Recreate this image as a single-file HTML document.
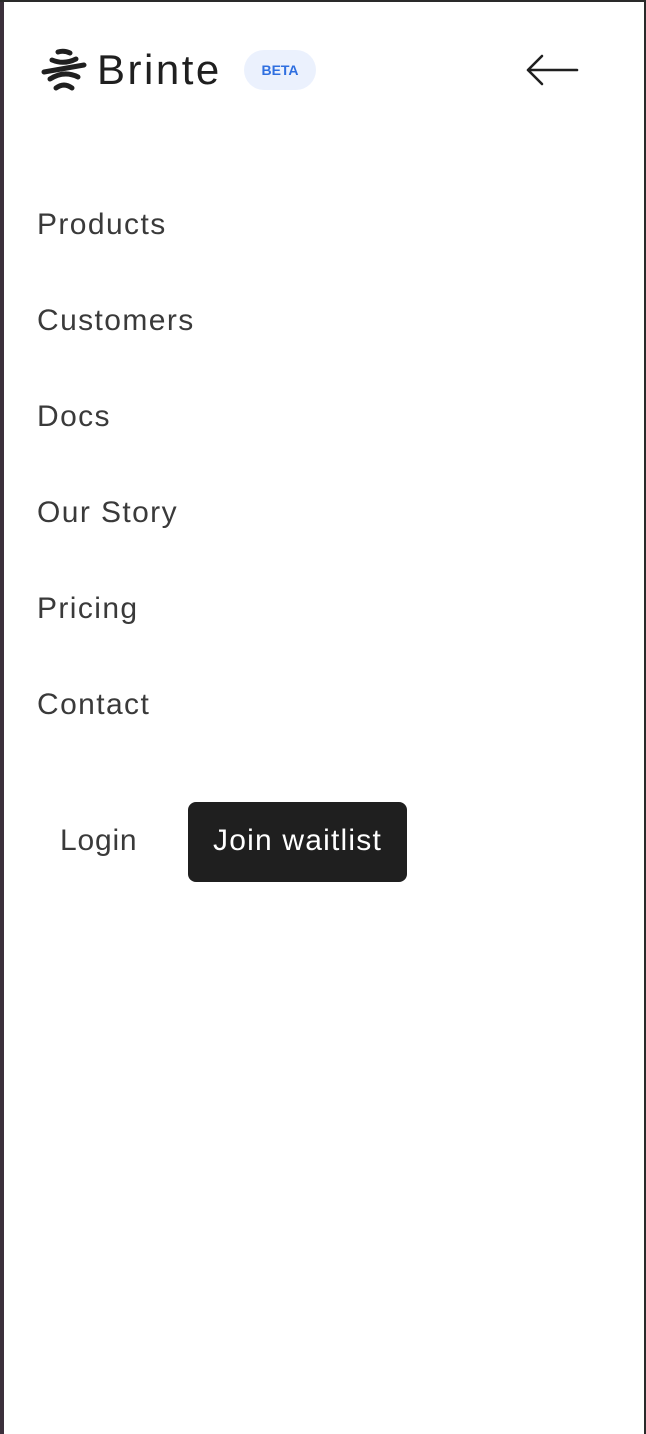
<!DOCTYPE html>
<html><head><meta charset="utf-8"><style>
html,body{margin:0;padding:0;}
body{width:646px;height:1434px;position:relative;background:#fff;font-family:"Liberation Sans",sans-serif;overflow:hidden;}
.bl{position:absolute;left:0;top:0;width:4px;height:1434px;background:#3b303b;}
.bt{position:absolute;left:0;top:0;width:646px;height:2px;background:#2a2a2a;}
.br{position:absolute;right:0;top:0;width:2px;height:1434px;background:#2a2a2a;}
.brand{position:absolute;left:97px;top:46px;font-size:42px;color:#1f1f1f;letter-spacing:2.5px;}
.beta{position:absolute;left:244px;top:50px;width:72px;height:40px;border-radius:20px;background:#ebf1fd;color:#2f6fe0;font-weight:bold;font-size:14px;text-align:center;line-height:40px;}
.nav{position:absolute;left:37px;font-size:30px;color:#3a3a3a;letter-spacing:1.4px;}
.login{position:absolute;left:60px;top:824px;font-size:30px;color:#3a3a3a;letter-spacing:0.8px;}
.btn{position:absolute;left:188px;top:802px;width:219px;height:80px;border-radius:8px;background:#1f1f1f;color:#fff;font-size:30px;text-align:center;line-height:78px;letter-spacing:1.2px;}
</style></head><body>
<div class="bl"></div><div class="bt"></div><div class="br"></div>
<svg style="position:absolute;left:40px;top:48px" width="50" height="44" viewBox="0 0 50 44" fill="none" stroke="#1f1f1f" stroke-width="5" stroke-linecap="round">
<path d="M18 4 Q24 2 30 5"/>
<path d="M12 12 Q24 17 36 11"/>
<path d="M4 24 L44 17"/>
<path d="M10 31 Q24 22 38 29"/>
<path d="M16 40 Q24 34 32 40"/>
</svg>
<div class="brand">Brinte</div>
<div class="beta">BETA</div>
<svg style="position:absolute;left:524px;top:52px" width="58" height="36" viewBox="0 0 58 36" fill="none" stroke="#1f1f1f" stroke-width="2.6" stroke-linecap="round" stroke-linejoin="round">
<path d="M4 18 H53 M18 4 L4 18 L18 32"/>
</svg>
<div class="nav" style="top:208px">Products</div>
<div class="nav" style="top:304px">Customers</div>
<div class="nav" style="top:400px">Docs</div>
<div class="nav" style="top:496px">Our Story</div>
<div class="nav" style="top:592px">Pricing</div>
<div class="nav" style="top:688px">Contact</div>
<div class="login">Login</div>
<div class="btn">Join waitlist</div>
</body></html>
